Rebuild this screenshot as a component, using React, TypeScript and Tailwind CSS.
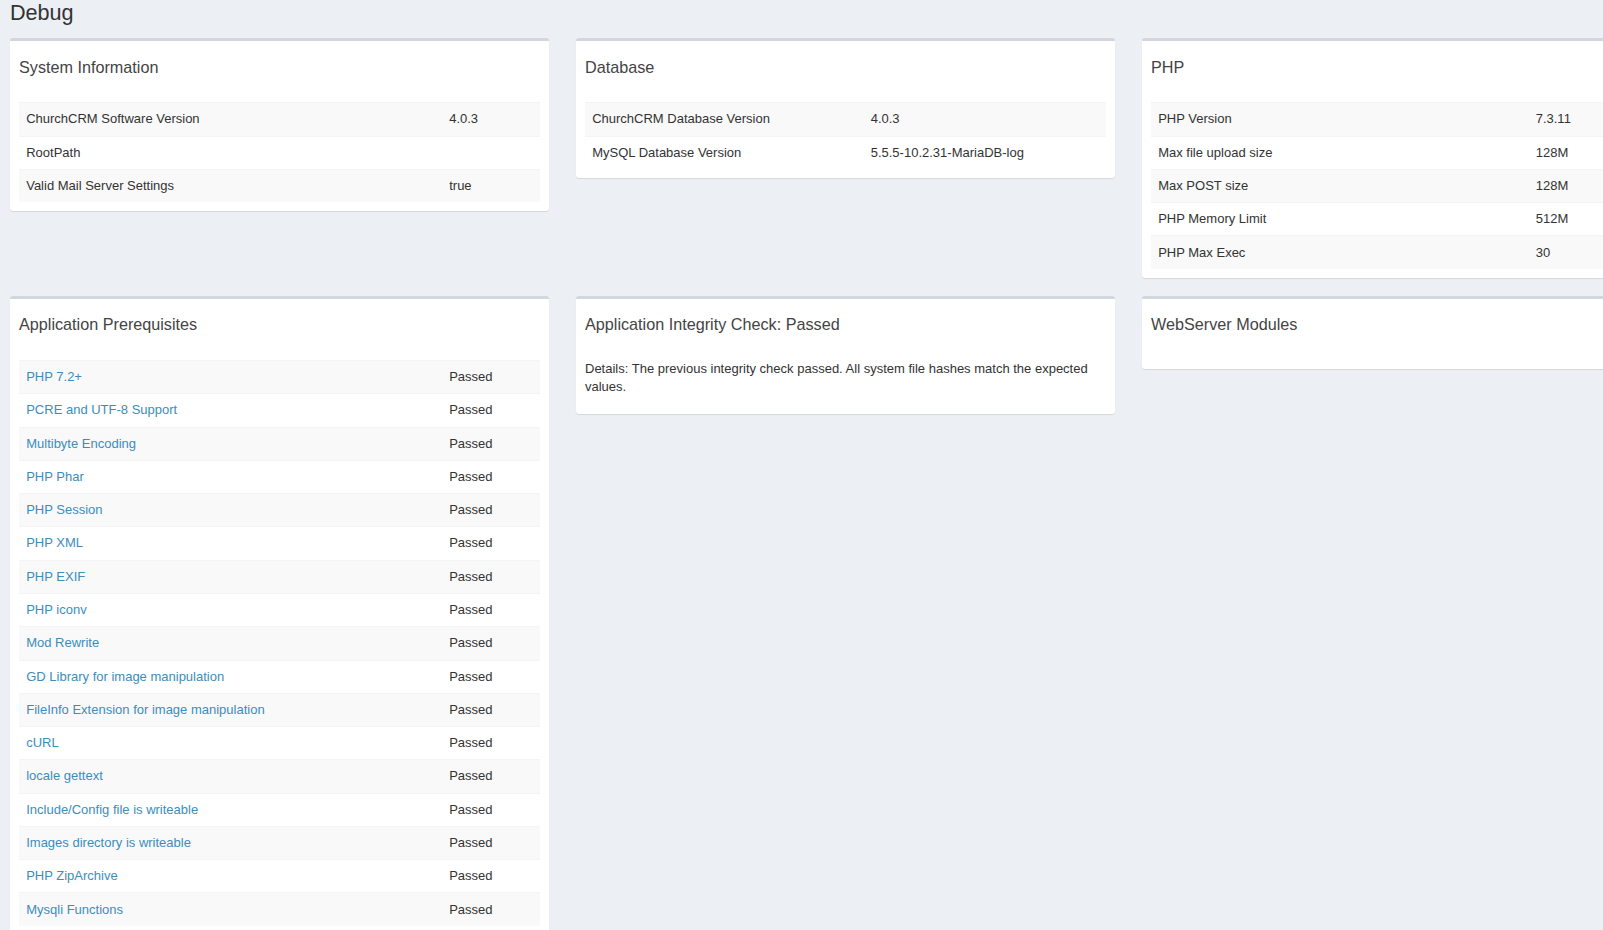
import React from "react";

type Row = { label: string; value: string; link?: boolean };

function Card({ title, children }: { title: string; children?: React.ReactNode }) {
  return (
    <div className="bg-white border-t-[3px] border-[#d2d6de] rounded-[3px] shadow-[0_1px_1px_rgba(0,0,0,0.1)]">
      <div className="pt-[17.6px] pb-[18.5px] px-[9px]">
        <h3 className="text-[16.2px] leading-[16.2px] text-[#444]">{title}</h3>
      </div>
      <div className="p-[9px]">{children}</div>
    </div>
  );
}

function Table({ rows, col }: { rows: Row[]; col: string }) {
  return (
    <table className="w-full border-collapse text-[13px]">
      <tbody>
        {rows.map((r, i) => (
          <tr key={i} className={i % 2 === 0 ? "bg-[#f9f9f9]" : "bg-white"}>
            <td
              className={`border-t border-[#f4f4f4] px-[7.2px] py-[7.1px] leading-[18.1px] ${col} ${
                r.link ? "text-[#3c8dbc]" : "text-[#333]"
              }`}
            >
              {r.label}
            </td>
            <td className="border-t border-[#f4f4f4] px-[7.2px] py-[7.1px] leading-[18.1px] text-[#333]">
              {r.value}
            </td>
          </tr>
        ))}
      </tbody>
    </table>
  );
}

const sysRows: Row[] = [
  { label: "ChurchCRM Software Version", value: "4.0.3" },
  { label: "RootPath", value: "" },
  { label: "Valid Mail Server Settings", value: "true" },
];

const dbRows: Row[] = [
  { label: "ChurchCRM Database Version", value: "4.0.3" },
  { label: "MySQL Database Version", value: "5.5.5-10.2.31-MariaDB-log" },
];

const phpRows: Row[] = [
  { label: "PHP Version", value: "7.3.11" },
  { label: "Max file upload size", value: "128M" },
  { label: "Max POST size", value: "128M" },
  { label: "PHP Memory Limit", value: "512M" },
  { label: "PHP Max Exec", value: "30" },
];

const prereqs = [
  "PHP 7.2+",
  "PCRE and UTF-8 Support",
  "Multibyte Encoding",
  "PHP Phar",
  "PHP Session",
  "PHP XML",
  "PHP EXIF",
  "PHP iconv",
  "Mod Rewrite",
  "GD Library for image manipulation",
  "FileInfo Extension for image manipulation",
  "cURL",
  "locale gettext",
  "Include/Config file is writeable",
  "Images directory is writeable",
  "PHP ZipArchive",
  "Mysqli Functions",
];

export default function App() {
  return (
    <div className="w-[1603px] h-[930px] overflow-hidden bg-[#ecf0f5] text-[#333] font-['Liberation_Sans',Arial,sans-serif]">
      <div className="pl-[10px]">
        <h1 className="pt-[2.4px] mb-[14px] text-[21.6px] leading-[21.6px] text-[#333]">Debug</h1>
        <div className="grid grid-cols-[539px_539px_539px] gap-x-[27px] gap-y-[18px] items-start">
          <Card title="System Information">
            <Table rows={sysRows} col="w-[423px]" />
          </Card>
          <Card title="Database">
            <Table rows={dbRows} col="w-[278.5px]" />
          </Card>
          <Card title="PHP">
            <Table rows={phpRows} col="w-[377.5px]" />
          </Card>
          <Card title="Application Prerequisites">
            <Table rows={prereqs.map((p) => ({ label: p, value: "Passed", link: true }))} col="w-[423px]" />
          </Card>
          <Card title="Application Integrity Check: Passed">
            <p className="text-[13px] leading-[18px] mb-[9px] text-[#333]">
              Details: The previous integrity check passed. All system file hashes match the expected values.
            </p>
          </Card>
          <Card title="WebServer Modules" />
        </div>
      </div>
    </div>
  );
}
